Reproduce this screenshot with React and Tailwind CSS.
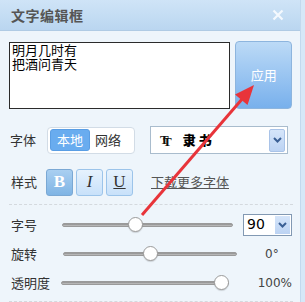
import React from 'react';

const cn = '"Noto Sans CJK SC", "Liberation Sans", sans-serif';

const Chevron = () => (
  <svg width="9" height="6" viewBox="0 0 9 6">
    <path d="M1 1 L4.5 4.5 L8 1" stroke="#3a5f95" strokeWidth="2" fill="none" />
  </svg>
);

const Slider = ({ label, pos, children }) => (
  <div className="flex items-center h-[29px]">
    <div className="w-[54px] pl-[2px] text-[13px] text-[#333]">{label}</div>
    <div className="relative w-[174px] h-[4px] rounded-full bg-gradient-to-b from-[#8d8d8d] to-[#c4c4c4] border border-[#9a9a9a]">
      <div
        className="absolute top-1/2 w-[15px] h-[15px] -mt-[7.5px] -ml-[7.5px] rounded-full bg-white border border-[#9b9b9b] shadow-[0_1px_1px_rgba(0,0,0,0.15)]"
        style={{ left: pos }}
      />
    </div>
    <div className="flex-1 flex">{children}</div>
  </div>
);

const StyleBtn = ({ active, children, className }) => (
  <div
    className={
      'w-[27px] h-[27px] rounded-[3px] border flex items-center justify-center text-[17px] ' +
      (active
        ? 'bg-gradient-to-b from-[#a9cff1] to-[#7fb4e4] border-[#7aa8d4] text-white'
        : 'bg-gradient-to-b from-[#e6f2fd] to-[#c8e1fa] border-[#9cc4ea] text-[#333]') +
      ' ' +
      className
    }
    style={{ fontFamily: '"Liberation Serif", serif' }}
  >
    {children}
  </div>
);

export default function App() {
  return (
    <div className="relative w-[305px] h-[302px] overflow-hidden bg-[#d6e8f8] flex" style={{ fontFamily: cn }}>
      <div className="w-[301px] h-full flex flex-col border-r border-[#c3d9ee]">
        {/* Title bar */}
        <div className="h-[31px] shrink-0 flex items-center justify-between pl-[11px] pr-[16px] bg-gradient-to-b from-[#cfe4f7] to-[#bad6f0] border-b border-[#b0cbe4]">
          <span className="text-[14px] font-bold text-[#555] tracking-[0.5px]">文字编辑框</span>
          <svg width="12" height="12" viewBox="0 0 12 12">
            <path d="M1.5 1.5 L10.5 10.5 M10.5 1.5 L1.5 10.5" stroke="#f4f9fe" strokeWidth="2.2" />
          </svg>
        </div>

        {/* Body */}
        <div className="flex-1 bg-[#eef5fb] pl-[9px] pr-[8px] pt-[11px]">
          <div className="flex items-start">
            <div className="w-[223px] h-[67px] bg-white border border-[#2b2b2b] px-[2px] text-[13px] leading-[13.5px] text-black">
              <div>明月几时有</div>
              <div>把酒问青天</div>
            </div>
            <div className="ml-[5px] w-[57px] h-[68px] -mt-[1px] rounded-[4px] border border-[#8db5de] bg-gradient-to-b from-[#bcdaf6] to-[#78b0ec] flex items-center justify-center text-white text-[13px]">
              应用
            </div>
          </div>

          {/* 字体 */}
          <div className="flex items-center mt-[17px] h-[28px]">
            <span className="w-[38px] pl-[1px] text-[13px] text-[#333]">字体</span>
            <div className="w-[88px] h-[27px] rounded-[4px] border border-[#d2dce6] bg-white flex items-center px-[2px] text-[13px]">
              <div className="w-[40px] h-[22px] rounded-[3px] bg-[#69acef] border border-[#5a9ee4] text-white flex items-center justify-center">本地</div>
              <div className="ml-[5px] text-[#333]">网络</div>
            </div>
            <div className="ml-[15px] w-[138px] h-[28px] border border-[#a9bccd] bg-white flex items-center justify-between pl-[9px] pr-[2px]">
              <div className="flex items-center">
                <span
                  className="font-bold text-[13px] text-[#111] [text-shadow:3px_2px_0_#111]"
                  style={{ fontFamily: '"Liberation Serif", serif' }}
                >
                  T
                </span>
                <span className="ml-[14px] text-[13px] font-black text-black tracking-[3px]">隶书</span>
              </div>
              <div className="w-[16px] h-[23px] rounded-[2px] bg-gradient-to-b from-[#d5e5fa] to-[#bcd3f3] border border-[#a9c3e8] flex items-center justify-center">
                <Chevron />
              </div>
            </div>
          </div>

          {/* 样式 */}
          <div className="flex items-center mt-[14px] h-[28px]">
            <span className="w-[37px] pl-[2px] text-[13px] text-[#333]">样式</span>
            <StyleBtn active className="font-bold">B</StyleBtn>
            <StyleBtn className="ml-[3px] italic">I</StyleBtn>
            <StyleBtn className="ml-[3px] underline">U</StyleBtn>
            <span className="ml-[18px] text-[13px] text-[#555] underline">下载更多字体</span>
          </div>

          <div className="mt-[8px] border-t border-dashed border-[#d4d9de] w-[284px]" />

          <div className="mt-[5px]">
            <Slider label="字号" pos="43%">
              <div className="ml-[10px] w-[49px] h-[22px] border border-[#8299b3] bg-white flex items-center justify-between pl-[3px] pr-[1px]">
                <span className="text-[14px] text-black" style={{ fontFamily: '"DejaVu Sans", sans-serif' }}>90</span>
                <div className="w-[15px] h-[18px] bg-gradient-to-b from-[#d5e5fa] to-[#bcd3f3] flex items-center justify-center">
                  <Chevron />
                </div>
              </div>
            </Slider>
            <Slider label="旋转" pos="50%">
              <span className="ml-[28px] text-[12px] text-[#444]" style={{ fontFamily: '"DejaVu Sans", sans-serif' }}>0°</span>
            </Slider>
            <Slider label="透明度" pos="96%">
              <span className="ml-[29px] text-[12px] text-[#444]" style={{ fontFamily: '"DejaVu Sans", sans-serif' }}>100%</span>
            </Slider>
          </div>

          <div className="mt-[4px] border-t border-dashed border-[#d4d9de] w-[284px]" />
        </div>
      </div>

      {/* Red annotation arrow */}
      <svg className="absolute inset-0 pointer-events-none" width="305" height="302">
        <line x1="142" y1="215" x2="243" y2="98" stroke="#e8343a" strokeWidth="3" />
        <polygon points="254,85 247.5,105 235,94.5" fill="#e8343a" />
      </svg>
    </div>
  );
}
